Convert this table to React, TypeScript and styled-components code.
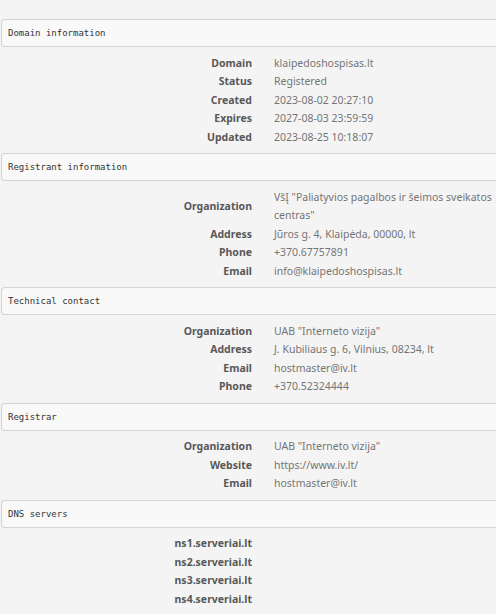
import React from "react";
import styled, { createGlobalStyle } from "styled-components";

const GlobalStyle = createGlobalStyle`
    html, body {
        margin: 0;
        padding: 0;
        background: #f4f4f4;
    }
    body {
        font-family: "Noto Sans", "Open Sans", sans-serif;
        font-size: 10.5px;
        overflow-x: hidden;
    }
`;

const Page = styled.div`
    padding: 19px 0 0 1px;
`;

const Section = styled.section`
    display: flex;
    flex-direction: column;
`;

const SectionTitle = styled.div`
    height: 26px;
    display: flex;
    align-items: center;
    padding: 0 0 0 6px;
    background: #f9f9f9;
    border: 1px solid #d4d4d4;
    border-right: none;
    border-radius: 4px 0 0 4px;
    font-family: "DejaVu Sans Mono", "Liberation Mono", monospace;
    font-size: 9px;
    color: #333;
`;

const Table = styled.div`
    display: grid;
    grid-template-columns: 251px 1fr;
    padding: 6.75px 0;
`;

const Label = styled.div`
    display: flex;
    align-items: center;
    justify-content: flex-end;
    font-weight: bold;
    color: #585858;
    line-height: 18.5px;
    white-space: nowrap;
`;

const Value = styled.div`
    padding: 0 0 0 22px;
    color: #747474;
    line-height: 18.5px;
    min-height: 18.5px;
    display: flex;
    align-items: center;
`;

type Row = [string, string];

const sections: { title: string; rows: Row[] }[] = [
    {
        title: "Domain information",
        rows: [
            ["Domain", "klaipedoshospisas.lt"],
            ["Status", "Registered"],
            ["Created", "2023-08-02 20:27:10"],
            ["Expires", "2027-08-03 23:59:59"],
            ["Updated", "2023-08-25 10:18:07"],
        ],
    },
    {
        title: "Registrant information",
        rows: [
            ["Organization", 'VšĮ "Paliatyvios pagalbos ir šeimos sveikatos centras"'],
            ["Address", "Jūros g. 4, Klaipėda, 00000, lt"],
            ["Phone", "+370.67757891"],
            ["Email", "info@klaipedoshospisas.lt"],
        ],
    },
    {
        title: "Technical contact",
        rows: [
            ["Organization", 'UAB "Interneto vizija"'],
            ["Address", "J. Kubiliaus g. 6, Vilnius, 08234, lt"],
            ["Email", "hostmaster@iv.lt"],
            ["Phone", "+370.52324444"],
        ],
    },
    {
        title: "Registrar",
        rows: [
            ["Organization", 'UAB "Interneto vizija"'],
            ["Website", "https://www.iv.lt/"],
            ["Email", "hostmaster@iv.lt"],
        ],
    },
    {
        title: "DNS servers",
        rows: [
            ["ns1.serveriai.lt", ""],
            ["ns2.serveriai.lt", ""],
            ["ns3.serveriai.lt", ""],
            ["ns4.serveriai.lt", ""],
        ],
    },
];

export default function App() {
    return (
        <>
            <GlobalStyle />
            <Page>
                {sections.map((s) => (
                    <Section key={s.title}>
                        <SectionTitle>{s.title}</SectionTitle>
                        <Table>
                            {s.rows.map(([label, value], i) => (
                                <React.Fragment key={i}>
                                    <Label>{label}</Label>
                                    <Value>{value}</Value>
                                </React.Fragment>
                            ))}
                        </Table>
                    </Section>
                ))}
            </Page>
        </>
    );
}
